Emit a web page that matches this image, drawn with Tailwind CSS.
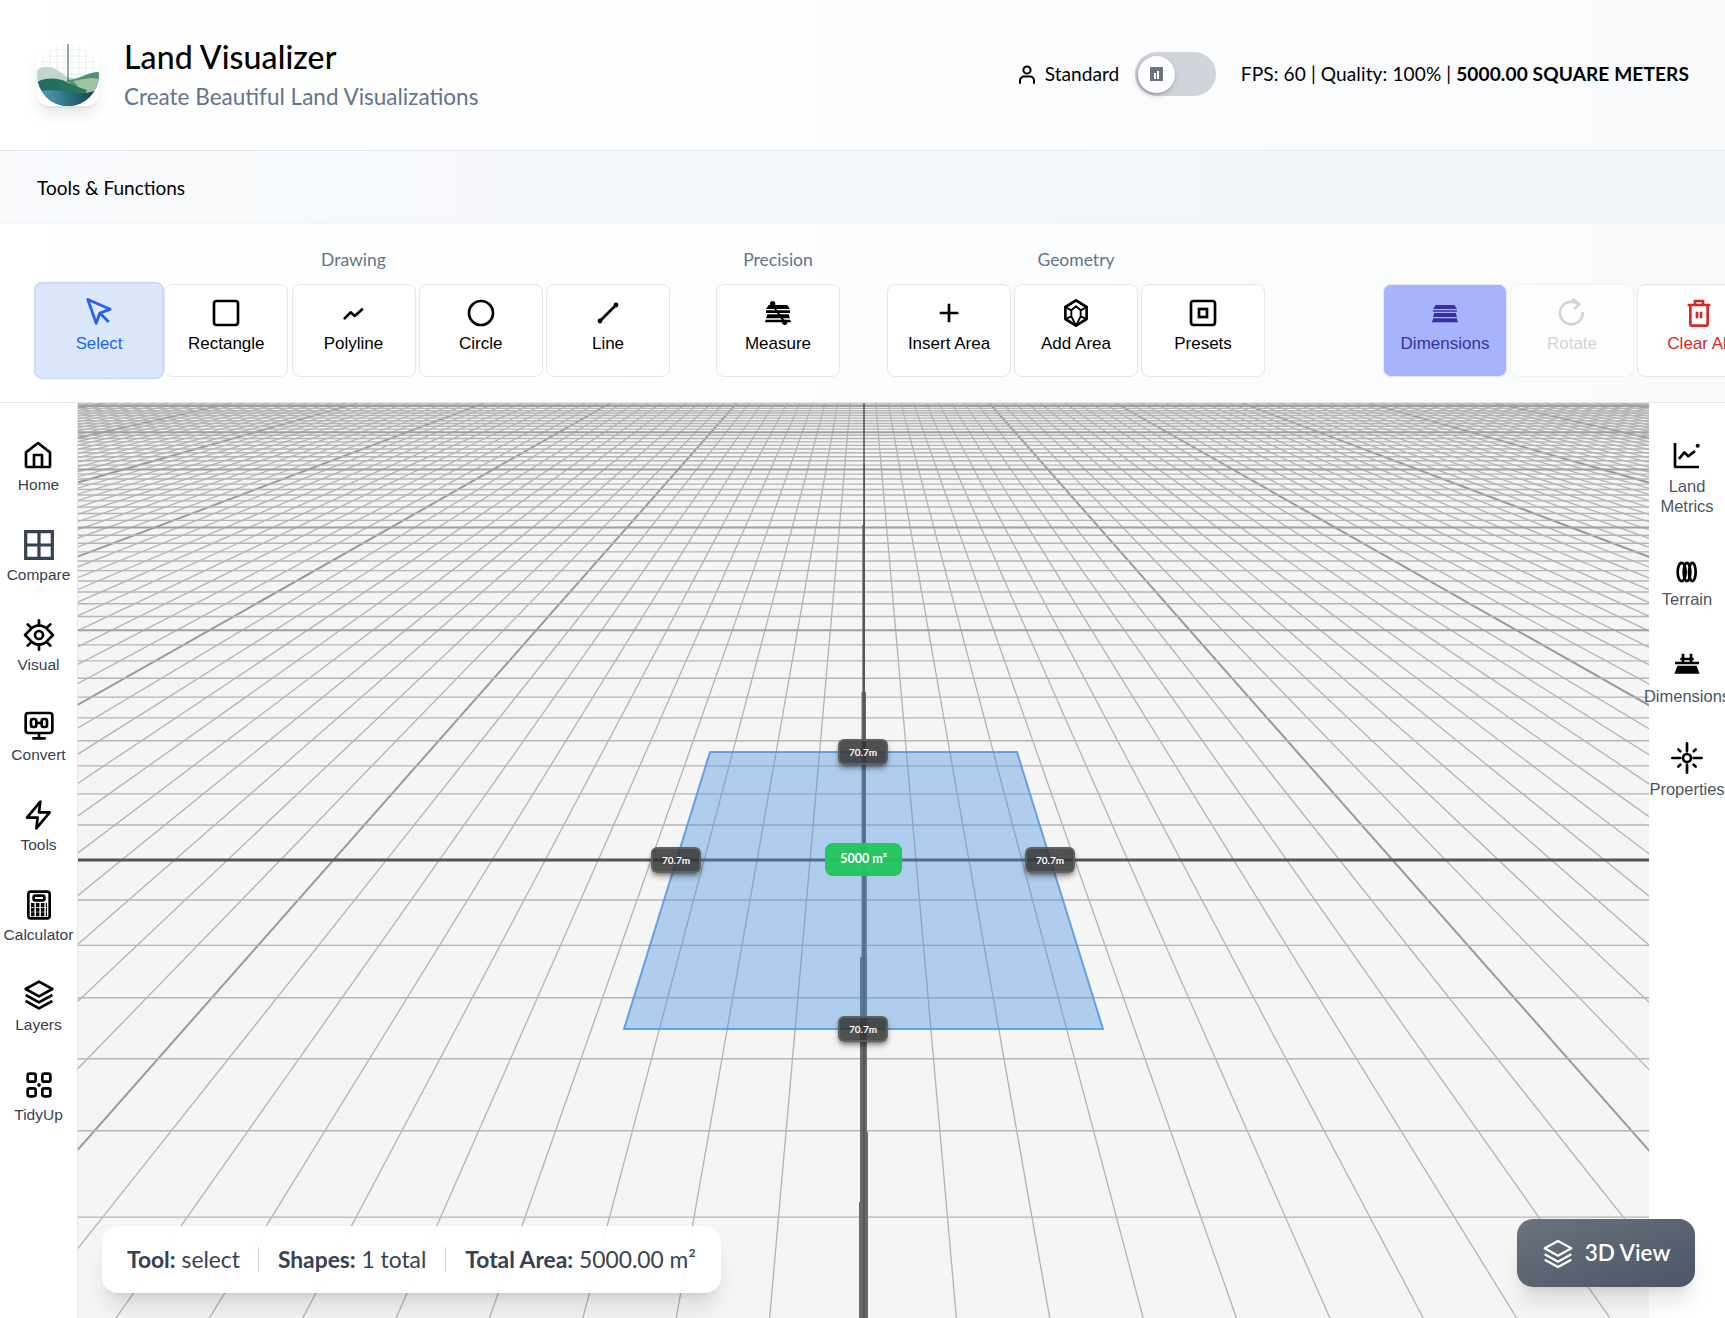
<!DOCTYPE html>
<html lang="en">
<head>
  <meta charset="UTF-8" />
  <meta name="viewport" content="width=device-width, initial-scale=1.0" />
  <title>Land Visualizer</title>
  <script src="https://cdn.jsdelivr.net/npm/@tailwindcss/browser@4"></script>
</head>
<body class="w-[1725px] h-[1318px] overflow-hidden bg-white font-['Lato',sans-serif] text-black">

  <!-- Header -->
  <header class="h-[151px] flex items-center justify-between pl-[37px] pr-[36px] border-b border-[#e2e8f0] bg-gradient-to-r from-white to-[#f8fafc]">
    <div class="flex items-center gap-[25px]">
      <div class="w-[62px] h-[62px] rounded-xl bg-white shadow-lg overflow-hidden">
        <svg viewBox="0 0 62 62" class="w-full h-full">
          <defs>
            <clipPath id="logo-clip"><circle cx="31" cy="31" r="31"/></clipPath>
            <linearGradient id="logo-water" x1="0" y1="0" x2="1" y2="0"><stop offset="0" stop-color="#56a6bd"/><stop offset="0.55" stop-color="#2a6a80"/><stop offset="1" stop-color="#17384a"/></linearGradient>
            <linearGradient id="logo-hill" x1="0" y1="0" x2="1" y2="0"><stop offset="0" stop-color="#1d6b5c"/><stop offset="1" stop-color="#2c7a5f"/></linearGradient>
          </defs>
          <g clip-path="url(#logo-clip)">
            <g stroke="#dbe8e3" stroke-width="0.6">
              <path d="M0 6H62M0 12H62M0 18H62M0 24H62M0 30H62M6 0V40M13 0V40M20 0V40M27 0V40M35 0V40M42 0V40M49 0V40M56 0V40"/>
            </g>
            <path d="M0 26C8 20 18 23 26 30C36 38 44 32 62 34V50H0Z" fill="#c2d6cd"/>
            <path d="M30 36C42 36 50 28 62 28V46H40Z" fill="#4f9168"/>
            <path d="M36 37C44 36 52 32 62 35V48H46Z" fill="#9dc29e"/>
            <path d="M0 38C10 33 22 34 30 38C36 41 42 44 50 46L44 62H0Z" fill="url(#logo-hill)"/>
            <path d="M0 47C14 45 28 47 40 49C46 50 56 48 62 45V62H0Z" fill="url(#logo-water)"/>
            <path d="M31 0V38" stroke="#20594b" stroke-width="1"/>
          </g>
        </svg>
      </div>
      <div class="-mt-[1px]">
        <h1 class="text-[32px] leading-[38px] font-medium tracking-[0.1px]">Land Visualizer</h1>
        <p class="text-[22.500px] leading-[30px] mt-[6px] text-[#64748b]">Create Beautiful Land Visualizations</p>
      </div>
    </div>
    <div class="flex items-center text-[19.100px] mb-[2px]">
      <svg class="w-6 h-6 mr-[6px]" viewBox="0 0 24 24" fill="none" stroke="currentColor" stroke-width="2" stroke-linecap="round"><circle cx="12" cy="8" r="3.6"/><path d="M5 21v-2.500a4 4 0 0 1 4-4h6a4 4 0 0 1 4 4V21"/></svg>
      <span class="w-[90px]">Standard</span>
      <div class="w-[81px] h-[44px] rounded-full bg-[#d1d5db] flex items-center pl-[3px]">
        <div class="w-[37px] h-[37px] rounded-full bg-white shadow-[-1px_2px_5px_rgba(0,0,0,0.3)] flex items-center justify-center">
          <div class="w-[13px] h-[14px] bg-[#6b7280] flex items-end justify-center gap-[1px] pb-[2px]">
            <span class="w-[2px] h-[6px] bg-white"></span><span class="w-[2px] h-[8px] bg-white"></span>
          </div>
        </div>
      </div>
      <div class="ml-[25px] whitespace-nowrap tracking-[0.1px]">FPS: 60 | Quality: 100% | <b class="font-bold">5000.00 SQUARE METERS</b></div>
    </div>
  </header>

  <!-- Tools bar title -->
  <div class="h-[73px] flex items-center pl-[37px] pt-[2px] text-[19px] bg-gradient-to-r from-[#f8fafc] to-[#f1f5f9] border-b border-[#f1f5f9]">Tools &amp; Functions</div>

  <!-- Toolbar -->
  <div class="h-[179px] flex pl-[37px] pt-[23px] bg-gradient-to-r from-white to-[#f8fafc] border-b border-[#e2e8f0] overflow-hidden font-['Liberation_Sans',sans-serif] text-[17px]">
    <div class="shrink-0">
      <div class="h-[37px] text-center text-[17.500px] text-[#64748b] font-['Lato',sans-serif]">Drawing</div>
      <div class="flex gap-[3.250px]">
        <button class="w-[124px] h-[93px] flex flex-col items-center pt-[12px] rounded-lg border-2 border-[#c9dafb] bg-[#dbe7fd] text-[#2563eb] scale-105">
          <svg class="w-8 h-8 -mt-[1px]" viewBox="0 0 24 24" fill="none" stroke="currentColor" stroke-width="2" stroke-linejoin="round"><path d="M4 3l6 17 2.600-7.400L20 10z"/><path d="M13 13l6 6"/></svg>
          <span class="mt-[2px] text-[16px]">Select</span>
        </button>
        <button class="w-[124px] h-[93px] flex flex-col items-center pt-[12px] rounded-lg border border-[#e5e7eb] bg-white">
          <svg class="w-8 h-8" viewBox="0 0 24 24" fill="none" stroke="currentColor" stroke-width="2"><rect x="3" y="3" width="18" height="18" rx="2"/></svg>
          <span class="mt-[2px]">Rectangle</span>
        </button>
        <button class="w-[124px] h-[93px] flex flex-col items-center pt-[12px] rounded-lg border border-[#e5e7eb] bg-white">
          <svg class="w-8 h-8" viewBox="0 0 24 24" fill="none" stroke="currentColor" stroke-width="2" stroke-linecap="round" stroke-linejoin="round"><path d="M5 16l4.500-4.500 3 2.800 5.500-5"/></svg>
          <span class="mt-[2px]">Polyline</span>
        </button>
        <button class="w-[124px] h-[93px] flex flex-col items-center pt-[12px] rounded-lg border border-[#e5e7eb] bg-white">
          <svg class="w-8 h-8" viewBox="0 0 24 24" fill="none" stroke="currentColor" stroke-width="2"><circle cx="12" cy="12" r="9"/></svg>
          <span class="mt-[2px]">Circle</span>
        </button>
        <button class="w-[124px] h-[93px] flex flex-col items-center pt-[12px] rounded-lg border border-[#e5e7eb] bg-white">
          <svg class="w-8 h-8" viewBox="0 0 24 24" fill="none" stroke="currentColor" stroke-width="2"><path d="M6 18L18 6"/><circle cx="6" cy="18" r="0.800" fill="currentColor"/><circle cx="18" cy="6" r="0.800" fill="currentColor"/></svg>
          <span class="mt-[2px]">Line</span>
        </button>
      </div>
    </div>
    <div class="shrink-0 ml-[46px]">
      <div class="h-[37px] text-center text-[17.500px] text-[#64748b] font-['Lato',sans-serif]">Precision</div>
      <button class="w-[124px] h-[93px] flex flex-col items-center pt-[12px] rounded-lg border border-[#e5e7eb] bg-white">
        <svg class="w-8 h-8" viewBox="0 0 24 24" fill="currentColor"><path d="M5 6h14l2 3H3zM3 10h18v2H3zM4 13h16l1 3H3zM3 17h18l1 2H2z"/><circle cx="8" cy="5" r="2"/><circle cx="17" cy="19" r="2"/><path d="M8 6l9 13" stroke="currentColor" stroke-width="1.500"/></svg>
        <span class="mt-[2px]">Measure</span>
      </button>
    </div>
    <div class="shrink-0 ml-[47px]">
      <div class="h-[37px] text-center text-[17.500px] text-[#64748b] font-['Lato',sans-serif]">Geometry</div>
      <div class="flex gap-[3px]">
        <button class="w-[124px] h-[93px] flex flex-col items-center pt-[12px] rounded-lg border border-[#e5e7eb] bg-white">
          <svg class="w-8 h-8" viewBox="0 0 24 24" fill="none" stroke="currentColor" stroke-width="2"><path d="M12 5v14M5 12h14"/></svg>
          <span class="mt-[2px]">Insert Area</span>
        </button>
        <button class="w-[124px] h-[93px] flex flex-col items-center pt-[12px] rounded-lg border border-[#e5e7eb] bg-white">
          <svg class="w-8 h-8" viewBox="0 0 24 24" fill="none" stroke="currentColor" stroke-width="2" stroke-linejoin="round"><path d="M12 2.500l8 5v9l-8 5-8-5v-9z"/><path stroke-width="1.400" d="M4 7.500l4.500 2.500v4.500L4 16.500M20 7.500L15.500 10v4.500l4.500 2M8.500 10L12 7l3.500 3M8.500 14.500L12 21.500l3.500-7"/></svg>
          <span class="mt-[2px]">Add Area</span>
        </button>
        <button class="w-[124px] h-[93px] flex flex-col items-center pt-[12px] rounded-lg border border-[#e5e7eb] bg-white">
          <svg class="w-8 h-8" viewBox="0 0 24 24" fill="none" stroke="currentColor" stroke-width="2"><rect x="3" y="3" width="18" height="18" rx="2"/><rect x="9" y="9" width="6" height="6"/></svg>
          <span class="mt-[2px]">Presets</span>
        </button>
      </div>
    </div>
    <div class="shrink-0 ml-[118px] pt-[37px]">
      <div class="flex gap-[3px]">
        <button class="w-[124px] h-[93px] flex flex-col items-center pt-[12px] rounded-lg border border-[#e5e7eb] bg-[#a5b4fc] text-[#3730a3]">
          <svg class="w-8 h-8" viewBox="0 0 24 24" fill="currentColor"><path d="M5 6h14l2 3H3zM3 10h18v1H3zM4 12h16l1 3H3zM3 16h18v1H3zM3 17h18l1 2H2z"/></svg>
          <span class="mt-[2px]">Dimensions</span>
        </button>
        <button class="w-[124px] h-[93px] flex flex-col items-center pt-[12px] rounded-lg border border-[#f1f2f4] bg-[#fdfdfe] text-[#d1d5db]">
          <svg class="w-8 h-8" viewBox="0 0 24 24" fill="none" stroke="currentColor" stroke-width="2" stroke-linecap="round"><path d="M20 12a8.500 8.500 0 1 1-3-6.500"/><path d="M13 2l4.500 3.500-3.500 3"/></svg>
          <span class="mt-[2px]">Rotate</span>
        </button>
        <button class="w-[124px] h-[93px] flex flex-col items-center pt-[12px] rounded-lg border border-[#e5e7eb] bg-white text-[#dc2626]">
          <svg class="w-8 h-8" viewBox="0 0 24 24" fill="none" stroke="currentColor" stroke-width="2"><path d="M3.500 6h17M9 6V3h6v3M5.500 6v14a1.500 1.500 0 0 0 1.500 1.500h10a1.500 1.500 0 0 0 1.500-1.500V6M10.500 11v5M13.500 11v5"/></svg>
          <span class="mt-[2px]">Clear All</span>
        </button>
      </div>
    </div>
  </div>

  <!-- Main -->
  <div class="flex h-[915px] font-['Liberation_Sans',sans-serif]">
    <!-- Left sidebar -->
    <aside class="w-[78px] shrink-0 border-r border-[#e5e7eb] flex flex-col items-center pt-[36px] gap-[26.500px] text-[15.500px] leading-[18px] text-[#374151]">
      <div class="h-[63.500px] flex flex-col items-center whitespace-nowrap">
        <svg class="w-8 h-8 mb-[5px] text-black" viewBox="0 0 24 24" fill="none" stroke="currentColor" stroke-width="2" stroke-linejoin="round"><path d="M3 10l9-7 9 7v10a1 1 0 0 1-1 1H4a1 1 0 0 1-1-1z"/><path d="M9 21v-9h6v9"/></svg>Home
      </div>
      <div class="h-[63.500px] flex flex-col items-center whitespace-nowrap">
        <svg class="w-8 h-8 mb-[5px] text-[#374151]" viewBox="0 0 24 24" fill="none" stroke="currentColor" stroke-width="2.400"><path d="M2 2h20v20H2zM12 2v20M2 12h20"/></svg>Compare
      </div>
      <div class="h-[63.500px] flex flex-col items-center whitespace-nowrap">
        <svg class="w-8 h-8 mb-[5px] text-black" viewBox="0 0 24 24" fill="none" stroke="currentColor" stroke-width="2" stroke-linecap="round" stroke-linejoin="round"><path d="M1.500 12L7 6.500Q12 3 17 6.500L22.500 12 17 17.500Q12 21 7 17.500z"/><circle cx="12" cy="12" r="3"/><path d="M12 1v4M12 19v4M3.500 4l2.500 2.500M20.500 4L18 6.500M3.500 20L6 17.500M20.500 20L18 17.500"/></svg>Visual
      </div>
      <div class="h-[63.500px] flex flex-col items-center whitespace-nowrap">
        <svg class="w-8 h-8 mb-[5px] text-black" viewBox="0 0 24 24" fill="none" stroke="currentColor" stroke-width="2"><rect x="2" y="3" width="20" height="15" rx="2"/><path d="M12 18v4M7 22h10"/><rect x="6" y="7.500" width="4" height="6" rx="1.500"/><rect x="14" y="7.500" width="4" height="6" rx="1.500"/><path d="M10 10.500h4"/></svg>Convert
      </div>
      <div class="h-[63.500px] flex flex-col items-center whitespace-nowrap">
        <svg class="w-8 h-8 mb-[5px] text-black" viewBox="0 0 24 24" fill="none" stroke="currentColor" stroke-width="2" stroke-linejoin="round"><path d="M13 2L3 14h8l-1 8 10-12h-8z"/></svg>Tools
      </div>
      <div class="h-[63.500px] flex flex-col items-center whitespace-nowrap">
        <svg class="w-8 h-8 mb-[5px] text-black" viewBox="0 0 24 24" fill="none" stroke="currentColor" stroke-width="2"><rect x="4" y="2" width="16" height="20" rx="2"/><rect x="8" y="5" width="8" height="3.500" rx="1"/><path d="M6 12h12M6 15.500h12M6 19h12" stroke-width="3" stroke-dasharray="2.600 1.100"/></svg>Calculator
      </div>
      <div class="h-[63.500px] flex flex-col items-center whitespace-nowrap">
        <svg class="w-8 h-8 mb-[5px] text-black" viewBox="0 0 24 24" fill="none" stroke="currentColor" stroke-width="2" stroke-linejoin="round"><path d="M12 2l10 5.500L12 13 2 7.500z"/><path d="M2 12l10 5.500L22 12M2 16.500L12 22l10-5.500"/></svg>Layers
      </div>
      <div class="h-[63.500px] flex flex-col items-center whitespace-nowrap">
        <svg class="w-8 h-8 mb-[5px] text-black" viewBox="0 0 24 24" fill="none" stroke="currentColor" stroke-width="2"><rect x="3.500" y="3.500" width="6" height="6" rx="1.500"/><rect x="14.500" y="3.500" width="6" height="6" rx="1.500"/><rect x="3.500" y="14.500" width="6" height="6" rx="1.500"/><rect x="14.500" y="14.500" width="6" height="6" rx="1.500"/><path d="M12 10.500v3M10.500 12h3" stroke-width="1.200"/></svg>TidyUp
      </div>
    </aside>

    <!-- Canvas -->
    <main class="relative w-[1571px] shrink-0 bg-[#f5f5f5] overflow-hidden">
      <svg id="grid" class="absolute inset-0" width="1571" height="915" viewBox="78 403 1571 915"></svg>
      <div class="absolute left-[760px] top-[336px] w-[50px] h-[26px] rounded-md border-2 border-[#666666]/80 bg-[#333333]/85 shadow-md shadow-black/40 text-white text-[10px] font-bold flex items-center justify-center font-['Lato',sans-serif]">70.7m</div>
      <div class="absolute left-[760px] top-[613px] w-[50px] h-[26px] rounded-md border-2 border-[#666666]/80 bg-[#333333]/85 shadow-md shadow-black/40 text-white text-[10px] font-bold flex items-center justify-center font-['Lato',sans-serif]">70.7m</div>
      <div class="absolute left-[573px] top-[444px] w-[50px] h-[26px] rounded-md border-2 border-[#666666]/80 bg-[#333333]/85 shadow-md shadow-black/40 text-white text-[10px] font-bold flex items-center justify-center font-['Lato',sans-serif]">70.7m</div>
      <div class="absolute left-[947px] top-[444px] w-[50px] h-[26px] rounded-md border-2 border-[#666666]/80 bg-[#333333]/85 shadow-md shadow-black/40 text-white text-[10px] font-bold flex items-center justify-center font-['Lato',sans-serif]">70.7m</div>
      <div class="absolute left-[747px] top-[440px] w-[77px] h-[33px] rounded-lg border-2 border-[#22c55e] bg-[#22c55e]/95 text-white text-[12.500px] font-bold flex items-center justify-center font-['Lato',sans-serif]">5000 m²</div>

      <!-- Status -->
      <div class="absolute left-[24px] top-[823px] w-[619px] h-[67px] rounded-2xl bg-white/95 shadow-xl flex items-center pl-[25px] text-[22.800px] text-[#374151] font-['Lato',sans-serif] whitespace-nowrap">
        <span><b class="font-bold">Tool:</b> select</span>
        <span class="w-px h-[25px] bg-[#d1d5db] ml-[18px] mr-[19px]"></span>
        <span><b class="font-bold">Shapes:</b> 1 total</span>
        <span class="w-px h-[25px] bg-[#d1d5db] ml-[19px] mr-[19px]"></span>
        <span><b class="font-bold">Total Area:</b> 5000.00 m²</span>
      </div>
    </main>

    <!-- Right sidebar -->
    <aside class="w-[76px] shrink-0 relative z-10 flex flex-col items-center pt-[36px] text-[16.500px] leading-[20px] text-[#4b5563] text-center">
      <div class="w-full h-[116px] flex flex-col items-center">
        <svg class="w-8 h-8 mb-[5px] text-black" viewBox="0 0 24 24" fill="none" stroke="currentColor" stroke-width="2" stroke-linejoin="round"><path d="M3 3v18h18"/><path d="M6 15l4-5 3 3 5-4"/><circle cx="20" cy="5" r="1.500" fill="currentColor" stroke="none"/></svg>
        <span>Land<br />Metrics</span>
      </div>
      <div class="w-full h-[92px] flex flex-col items-center">
        <svg class="w-8 h-8 mt-[1px] mb-[1px] text-black" viewBox="0 0 24 24" fill="none" stroke="currentColor" stroke-width="2"><ellipse cx="8" cy="12" rx="3" ry="6.800"/><ellipse cx="12" cy="12" rx="2.500" ry="6.800"/><ellipse cx="16" cy="12" rx="2.500" ry="6.800"/></svg>
        <span>Terrain</span>
      </div>
      <div class="w-full h-[95px] flex flex-col items-center whitespace-nowrap">
        <svg class="w-8 h-8 mb-[7px] text-black" viewBox="0 0 24 24" fill="currentColor" stroke="currentColor" stroke-width="2"><path d="M3 12h18M4 19h16l-1.500-4h-13zM9 5v7M15 5v7M7 9h10"/></svg>
        <span>Dimensions</span>
      </div>
      <div class="w-full flex flex-col items-center whitespace-nowrap">
        <svg class="w-8 h-8 mb-[5px] text-black" viewBox="0 0 24 24" fill="none" stroke="currentColor" stroke-width="2" stroke-linecap="round"><circle cx="12" cy="12" r="3"/><path d="M12 1v6M12 17v6M1 12h6M17 12h6M5.500 5.500l1.500 1.500M18.500 5.500L17 7M5.500 18.500L7 17M18.500 18.500L17 17"/></svg>
        <span>Properties</span>
      </div>
    </aside>
  </div>

  <!-- 3D View button -->
  <button class="absolute left-[1517px] top-[1219px] w-[178px] h-[68px] rounded-2xl bg-gradient-to-br from-[#6b7280] to-[#4b5563] shadow-xl text-white text-[22.500px] font-semibold flex items-center justify-center gap-[11px] font-['Lato',sans-serif]">
    <svg class="w-8 h-8" viewBox="0 0 24 24" fill="none" stroke="currentColor" stroke-width="1.700" stroke-linejoin="round"><path d="M12 3l10 5.500L12 14 2 8.500z"/><path d="M2 13l10 5.500L22 13M2 17l10 5.500L22 17"/></svg>
    3D View
  </button>

  <script>
    // perspective grid, numbers fitted from the 70.7m square on screen
    const CX = 863, HORIZON = 260, CAM_H = 113.3, C = 96570, Z0 = 160.9;
    const yTop = 403, yBottom = 1318;
    const svg = document.getElementById('grid');
    let out = '';
    const line = (x1, y1, x2, y2, color, w) => {
      out += '<line x1="' + x1 + '" y1="' + y1 + '" x2="' + x2 + '" y2="' + y2 + '" stroke="' + color + '" stroke-width="' + w + '"/>';
    };
    // depth lines
    for (let x = -1500; x <= 1500; x += 10) {
      if (x === 0) continue;
      const k = x / CAM_H;
      const major = x % 100 === 0;
      line(CX + k * (yTop - HORIZON), yTop, CX + k * (yBottom - HORIZON), yBottom, major ? '#999999' : '#b3b3b3', major ? 2 : 1.3);
    }
    // cross lines
    for (let n = -60; n <= 6; n++) {
      if (n === 0) continue;
      const y = HORIZON + C / (Z0 - n * 10);
      if (y < yTop) continue;
      const major = n % 10 === 0;
      line(78, y, 1649, y, major ? '#a0a0a0' : '#b5b5b5', major ? 2 : 1.4);
    }
    // axes, the vertical one gets wider in steps towards the camera
    line(78, 860, 1649, 860, '#555555', 3);
    const steps = [
      [403, 464, 863.5, 864.5], [464, 525, 863.3, 865], [525, 692, 862.3, 865],
      [692, 860, 861.5, 866], [860, 957, 861.5, 866.8], [957, 1132, 860, 867],
      [1132, 1202, 860, 868], [1202, 1318, 859, 868]
    ];
    steps.forEach(s => {
      out += '<rect x="' + s[2] + '" y="' + s[0] + '" width="' + (s[3] - s[2]) + '" height="' + (s[1] - s[0]) + '" fill="#6a6a6a"/>';
    });
    line(864, yTop, 864, yBottom, '#444444', 1);
    // the 70.7m square
    out += '<polygon points="710,752 1017,752 1103,1029 624,1029" fill="#4a90e2" fill-opacity="0.4" stroke="#4a90e2" stroke-opacity="0.8" stroke-width="2"/>';
    svg.innerHTML = out;
  </script>
</body>
</html>
